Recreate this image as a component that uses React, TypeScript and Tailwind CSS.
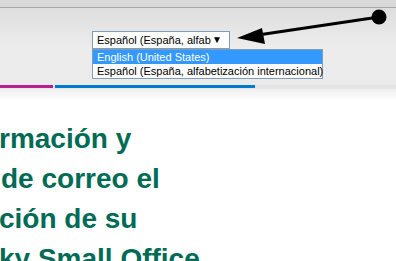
export default function App() {
  return (
    <div className="relative w-[396px] h-[261px] overflow-hidden bg-white font-['Liberation_Sans',Arial,sans-serif]">
      {/* header strip */}
      <div className="h-[7px] bg-[#d9d9d9]" />
      <div className="h-px bg-[#a9a9a9]" />
      <div className="h-[77px] bg-gradient-to-b from-[#dedede] via-[#ececec] to-[#ebebeb] pt-[23px] pl-[92px]">
        <div className="relative w-[138px]">
          <div className="flex h-[18px] items-center border border-[#7f9db9] bg-white pl-[4px] pr-[7px] text-[11px] leading-none text-black">
            <span className="whitespace-nowrap">Español (España, alfab</span>
            <span className="ml-auto text-[10px]">▼</span>
          </div>
          <div className="absolute left-0 top-[18px] w-[231px] whitespace-nowrap border border-[#7f9db9] bg-white text-[11px] leading-[14px]">
            <div className="bg-[#3399ff] pl-[4px] text-white">English (United States)</div>
            <div className="pl-[4px] text-black">Español (España, alfabetización internacional)</div>
          </div>
        </div>
      </div>
      {/* color tabs */}
      <div className="flex h-[3px] gap-[2px] bg-[#e4e4e4]">
        <div className="w-[53px] bg-[#b5228f]" />
        <div className="w-[200px] bg-[#007acc]" />
      </div>
      <div className="h-px bg-[#e6e6e6]" />
      <div className="h-[12px] bg-gradient-to-b from-[#efefef] to-white" />
      {/* heading */}
      <div className="pt-[18px] text-[28px] font-bold leading-[40px] text-[#016b55] whitespace-nowrap">
        <div className="-ml-[1px]">rmación y</div>
        <div className="ml-[1px]">de correo el</div>
        <div className="-ml-[1px]">ción de su</div>
        <div className="-ml-[1px]">ky Small Office</div>
      </div>
      {/* annotation arrow */}
      <svg className="absolute left-0 top-0" width="396" height="261" viewBox="0 0 396 261">
        <line x1="379" y1="17" x2="258" y2="35" stroke="#000" strokeWidth="3" />
        <polygon points="237,38 262,28 265,44" fill="#000" />
        <circle cx="379" cy="17" r="7.5" fill="#000" />
      </svg>
    </div>
  )
}
